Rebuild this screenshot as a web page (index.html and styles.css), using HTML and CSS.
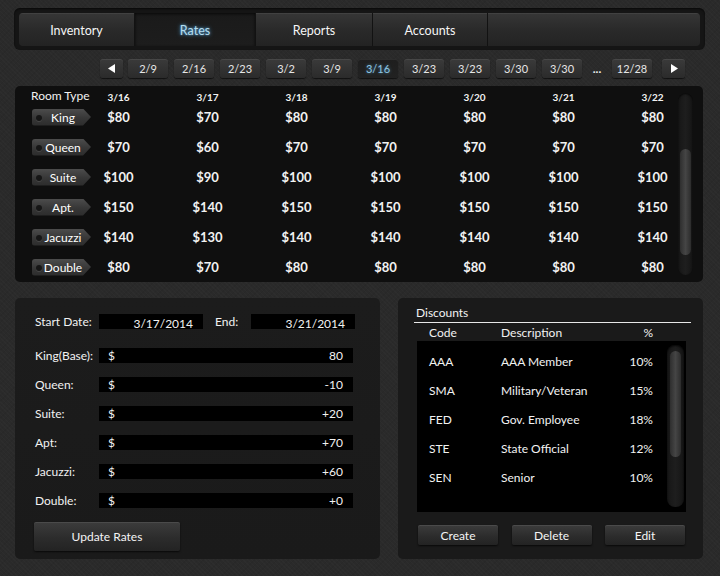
FILE: index.html
```html
<!DOCTYPE html>
<html>
<head>
<meta charset="utf-8">
<link rel="stylesheet" href="styles.css">
</head>
<body>
<div class="app">
  <div class="tabbar">
    <div class="tabs">
      <div class="tab t1">Inventory</div>
      <div class="tab t2 active">Rates</div>
      <div class="tab t3">Reports</div>
      <div class="tab t4">Accounts</div>
      <div class="tab tfill"></div>
    </div>
  </div>

  <div class="datenav">
    <div class="dbtn arrow prev"><svg width="8" height="9" viewBox="0 0 8 9"><polygon points="7,0 7,9 0,4.5" fill="#fff"/></svg></div>
    <div class="dbtn">2/9</div>
    <div class="dbtn">2/16</div>
    <div class="dbtn">2/23</div>
    <div class="dbtn">3/2</div>
    <div class="dbtn">3/9</div>
    <div class="dbtn sel">3/16</div>
    <div class="dbtn">3/23</div>
    <div class="dbtn">3/23</div>
    <div class="dbtn">3/30</div>
    <div class="dbtn">3/30</div>
    <div class="dots">...</div>
    <div class="dbtn">12/28</div>
    <div class="dbtn arrow next"><svg width="8" height="9" viewBox="0 0 8 9"><polygon points="1,0 1,9 8,4.5" fill="#fff"/></svg></div>
  </div>

  <div class="ratepanel">
    <div class="rgrid">
      <div class="rhead rt">Room Type</div>
      <div class="rhead">3/16</div>
      <div class="rhead">3/17</div>
      <div class="rhead">3/18</div>
      <div class="rhead">3/19</div>
      <div class="rhead">3/20</div>
      <div class="rhead">3/21</div>
      <div class="rhead">3/22</div>

      <div class="rcell"><div class="tag"><span class="dot"></span>King</div></div>
      <div class="rval">$80</div><div class="rval">$70</div><div class="rval">$80</div><div class="rval">$80</div><div class="rval">$80</div><div class="rval">$80</div><div class="rval">$80</div>

      <div class="rcell"><div class="tag"><span class="dot"></span>Queen</div></div>
      <div class="rval">$70</div><div class="rval">$60</div><div class="rval">$70</div><div class="rval">$70</div><div class="rval">$70</div><div class="rval">$70</div><div class="rval">$70</div>

      <div class="rcell"><div class="tag"><span class="dot"></span>Suite</div></div>
      <div class="rval">$100</div><div class="rval">$90</div><div class="rval">$100</div><div class="rval">$100</div><div class="rval">$100</div><div class="rval">$100</div><div class="rval">$100</div>

      <div class="rcell"><div class="tag"><span class="dot"></span>Apt.</div></div>
      <div class="rval">$150</div><div class="rval">$140</div><div class="rval">$150</div><div class="rval">$150</div><div class="rval">$150</div><div class="rval">$150</div><div class="rval">$150</div>

      <div class="rcell"><div class="tag"><span class="dot"></span>Jacuzzi</div></div>
      <div class="rval">$140</div><div class="rval">$130</div><div class="rval">$140</div><div class="rval">$140</div><div class="rval">$140</div><div class="rval">$140</div><div class="rval">$140</div>

      <div class="rcell"><div class="tag"><span class="dot"></span>Double</div></div>
      <div class="rval">$80</div><div class="rval">$70</div><div class="rval">$80</div><div class="rval">$80</div><div class="rval">$80</div><div class="rval">$80</div><div class="rval">$80</div>
    </div>
    <div class="vscroll big"><div class="thumb"></div></div>
  </div>

  <div class="bottom">
    <div class="editpanel">
      <div class="frow first">
        <span class="lbl">Start Date:</span>
        <span class="datebox">3/17/2014</span>
        <span class="lbl end">End:</span>
        <span class="datebox">3/21/2014</span>
      </div>
      <div class="frow"><span class="lbl">King(Base):</span><span class="money"><span>$</span><span>80</span></span></div>
      <div class="frow"><span class="lbl">Queen:</span><span class="money"><span>$</span><span>-10</span></span></div>
      <div class="frow"><span class="lbl">Suite:</span><span class="money"><span>$</span><span>+20</span></span></div>
      <div class="frow"><span class="lbl">Apt:</span><span class="money"><span>$</span><span>+70</span></span></div>
      <div class="frow"><span class="lbl">Jacuzzi:</span><span class="money"><span>$</span><span>+60</span></span></div>
      <div class="frow"><span class="lbl">Double:</span><span class="money"><span>$</span><span>+0</span></span></div>
      <div class="btn update">Update Rates</div>
    </div>

    <div class="discpanel">
      <div class="disctitle">Discounts</div>
      <div class="dhead"><span class="c1">Code</span><span class="c2">Description</span><span class="c3">%</span></div>
      <div class="dlist">
        <div class="drow"><span class="c1">AAA</span><span class="c2">AAA Member</span><span class="c3">10%</span></div>
        <div class="drow"><span class="c1">SMA</span><span class="c2">Military/Veteran</span><span class="c3">15%</span></div>
        <div class="drow"><span class="c1">FED</span><span class="c2">Gov. Employee</span><span class="c3">18%</span></div>
        <div class="drow"><span class="c1">STE</span><span class="c2">State Official</span><span class="c3">12%</span></div>
        <div class="drow"><span class="c1">SEN</span><span class="c2">Senior</span><span class="c3">10%</span></div>
        <div class="vscroll small"><div class="thumb"></div></div>
      </div>
      <div class="dbtns">
        <div class="btn sm">Create</div>
        <div class="btn sm">Delete</div>
        <div class="btn sm">Edit</div>
      </div>
    </div>
  </div>
</div>
</body>
</html>
```

FILE: styles.css
```css
* { box-sizing: border-box; }
html, body { margin: 0; padding: 0; }
body {
  width: 720px;
  height: 576px;
  overflow: hidden;
  background-color: #2a2a2a;
  background-image:
    repeating-linear-gradient(45deg, rgba(255,255,255,0.015) 0 1px, transparent 1px 3px),
    repeating-linear-gradient(-45deg, rgba(0,0,0,0.05) 0 1px, transparent 1px 4px);
  font-family: Lato, "Open Sans", sans-serif;
  color: #f2f2f2;
}
.app { padding: 8px 15px 0 14px; }

/* tabs */
.tabbar {
  height: 42px;
  padding: 5px;
  background: #151515;
  border-radius: 6px;
  box-shadow: inset 0 1px 2px rgba(0,0,0,0.6);
}
.tabs {
  display: flex;
  height: 33px;
  border-radius: 4px;
  overflow: hidden;
}
.tab {
  display: flex;
  align-items: center;
  justify-content: center;
  font-size: 12.5px;
  color: #f6f6f6;
  padding-top: 1px;
  background: linear-gradient(#363636, #2a2a2a 50%, #232323);
  border-right: 1px solid #121212;
  box-shadow: inset 0 1px 0 rgba(255,255,255,0.06);
}
.t1 { width: 116px; }
.t2 { width: 121px; }
.t3 { width: 117px; }
.t4 { width: 115px; }
.tfill { flex: 1; border-right: none; }
.tab.active {
  background: linear-gradient(#1a1a1a, #1d1d1d);
  box-shadow: inset 0 1px 3px rgba(0,0,0,0.7);
  color: #b4dcee;
  text-shadow: 0 0 4px rgba(90,170,220,0.9), 0 0 2px rgba(90,170,220,0.8);
}

/* date nav */
.datenav {
  display: flex;
  align-items: center;
  gap: 6px;
  margin: 9px 0 0 86px;
  height: 19px;
}
.dbtn {
  width: 40px;
  height: 19px;
  display: flex;
  align-items: center;
  justify-content: center;
  font-size: 11px;
  color: #e6e6e6;
  border-radius: 3px;
  background: linear-gradient(#3a3a3a, #2b2b2b);
  box-shadow: 0 1px 1px rgba(0,0,0,0.6), inset 0 1px 0 rgba(255,255,255,0.07);
}
.dbtn.arrow { width: 23px; }
.dbtn.prev { margin-right: -1px; }
.dbtn.next { margin-left: 4px; }
.dbtn.sel {
  background: linear-gradient(#1e1e1e, #222);
  color: #8fc6e2;
  text-shadow: 0 0 3px rgba(80,160,210,0.8);
}
.dots {
  width: 18px;
  text-align: center;
  font-size: 12px;
  font-weight: bold;
  color: #eee;
  line-height: 19px;
}

/* rates table */
.ratepanel {
  position: relative;
  margin: 8px 2px 0 1px;
  height: 196px;
  background: #0f0f0f;
  border-radius: 5px;
  padding: 2px 0 0 16px;
}
.rgrid {
  display: grid;
  grid-template-columns: 43px repeat(7, 89px);
  grid-template-rows: 14px repeat(6, 30px);
  align-items: center;
}
.rhead {
  text-align: center;
  font-size: 10px;
  font-weight: bold;
  padding-top: 4px;
}
.rhead.rt {
  text-align: left;
  font-size: 12px;
  font-weight: normal;
  white-space: nowrap;
  padding-top: 0;
}
.rval {
  text-align: center;
  font-size: 13px;
  font-weight: bold;
}
.rcell { white-space: nowrap; }
.tag {
  position: relative;
  display: flex;
  align-items: center;
  justify-content: center;
  width: 59px;
  height: 17px;
  margin-left: 1px;
  padding: 0 6px 0 9px;
  font-size: 12px;
  color: #fff;
  border-radius: 3px 0 0 3px;
  background: linear-gradient(#4c4c4c, #383838 50%, #2c2c2c);
  clip-path: polygon(0 0, 51px 0, 100% 50%, 51px 100%, 0 100%);
}
.dot {
  position: absolute;
  left: 4px;
  top: 6px;
  width: 6px;
  height: 6px;
  border-radius: 50%;
  background: #161616;
  box-shadow: 0 1px 0 rgba(255,255,255,0.1);
}

.vscroll {
  position: absolute;
  border-radius: 8px;
  background: linear-gradient(90deg, #161616, #1e1e1e 50%, #141414);
  box-shadow: inset 0 1px 2px rgba(0,0,0,0.8);
}
.vscroll .thumb {
  position: absolute;
  left: 2px;
  right: 2px;
  border-radius: 6px;
  background: linear-gradient(90deg, #2e2e2e, #454545 50%, #2c2c2c);
}
.vscroll.big { right: 10px; top: 7px; bottom: 7px; width: 15px; }
.vscroll.big .thumb { top: 56px; height: 106px; }

/* bottom */
.bottom {
  display: flex;
  justify-content: space-between;
  margin: 16px 2px 0 1px;
}
.editpanel {
  width: 365px;
  height: 261px;
  border-radius: 5px;
  background: linear-gradient(#1c1c1c, #1a1a1a);
  padding: 16px 0 0 20px;
  font-size: 12px;
}
.frow {
  display: flex;
  align-items: center;
  height: 15px;
  margin-bottom: 14px;
}
.frow.first { margin-bottom: 19px; }
.lbl { width: 64px; white-space: nowrap; }
.lbl.end { width: 36px; margin-left: 12px; }
.datebox {
  width: 104px;
  height: 15px;
  background: #000;
  text-align: right;
  padding-right: 10px;
  line-height: 19px;
  font-size: 12px;
}
.money {
  display: flex;
  justify-content: space-between;
  width: 254px;
  height: 15px;
  line-height: 15px;
  background: #000;
  padding: 0 10px 0 9px;
}
.btn {
  display: flex;
  align-items: center;
  justify-content: center;
  color: #f4f4f4;
  background: linear-gradient(#3c3c3c, #2c2c2c 55%, #232323);
  box-shadow: 0 1px 2px rgba(0,0,0,0.7), inset 0 1px 0 rgba(255,255,255,0.08);
  border-radius: 2px;
}
.btn.update {
  width: 146px;
  height: 29px;
  margin: 0 0 0 -1px;
  font-size: 12px;
}

.discpanel {
  width: 305px;
  height: 261px;
  border-radius: 5px;
  background: #1a1a1a;
  padding: 5px 12px 0 16px;
  font-size: 12px;
}
.disctitle {
  padding: 0 0 0 2px;
  line-height: 19px;
  border-bottom: 1px solid #e8e8e8;
}
.dhead, .drow { display: flex; align-items: center; }
.dhead { height: 18px; padding-left: 15px; }
.c1 { width: 72px; }
.c2 { width: 112px; }
.c3 { width: 40px; text-align: right; }
.dlist {
  position: relative;
  margin-left: 3px;
  width: 269px;
  height: 171px;
  background: #000;
  padding: 6px 0 0 12px;
}
.drow { height: 29px; }
.vscroll.small { right: 2px; top: 4px; bottom: 5px; width: 17px; }
.vscroll.small .thumb { left: 3px; right: 3px; top: 6px; height: 106px; }
.dbtns {
  display: flex;
  justify-content: space-between;
  margin: 13px 0 0 4px;
  width: 267px;
}
.btn.sm { width: 80px; height: 20px; font-size: 12px; }
```
